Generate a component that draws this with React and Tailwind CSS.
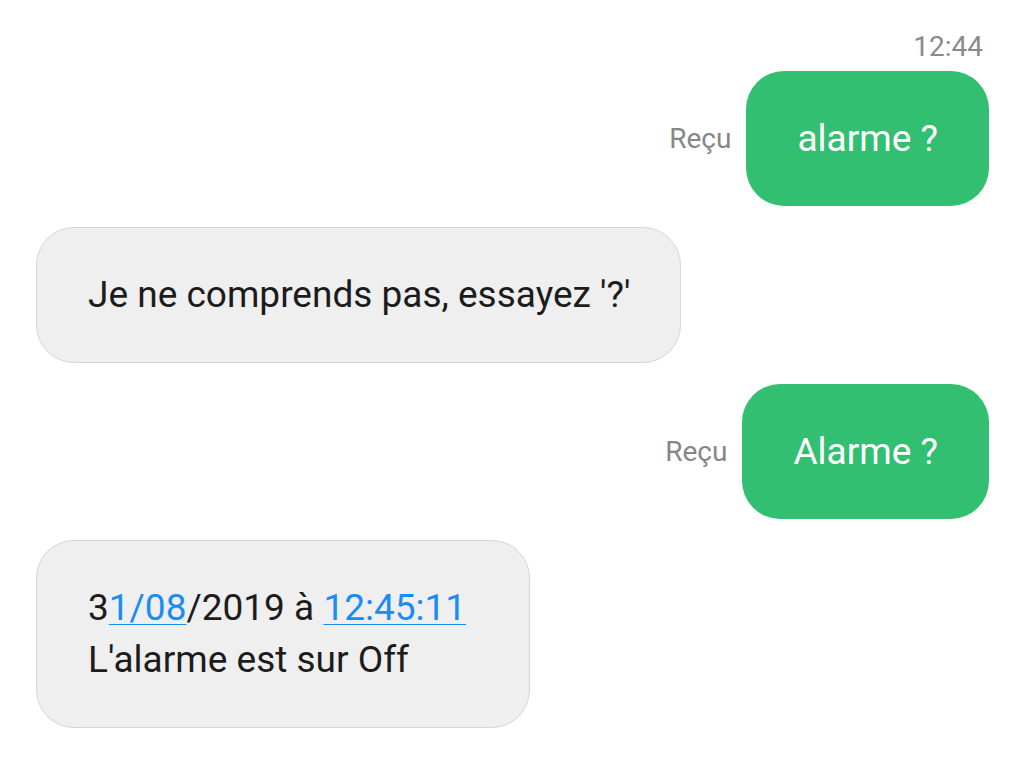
import React from "react";

// sent message (green) with "Reçu" status on its left
function Sent({ text }) {
  return (
    <div className="flex items-center justify-end gap-[15px]">
      <span className="text-[28px] leading-[32px] text-[#868686]">Reçu</span>
      <div className="rounded-[38px] bg-[#33bf71] px-[51px] py-[41px] text-[37px] leading-[53px] text-white">
        {text}
      </div>
    </div>
  );
}

// received message (gray)
function Received({ children, wide }) {
  return (
    <div className="flex justify-start">
      <div
        className={`rounded-[38px] border border-[#d6d6d6] bg-[#efefef] py-[41px] pl-[51px] text-[37px] leading-[52px] text-[#1c1c1c] ${wide ? "pr-[63px]" : "pr-[49px]"}`}
      >
        {children}
      </div>
    </div>
  );
}

export default function App() {
  return (
    <div
      className="flex h-[759px] w-[1020px] flex-col gap-[21px] overflow-hidden bg-white pl-[36px] pr-[31px] pt-[31px]"
      style={{ fontFamily: "Roboto, 'Noto Sans', sans-serif" }}
    >
      <div className="-mb-[13px] pr-[6px] text-right text-[28px] leading-[32px] text-[#8a8a8a]">12:44</div>
      <Sent text="alarme ?" />
      <Received>Je ne comprends pas, essayez '?'</Received>
      <Sent text="Alarme ?" />
      <Received wide>
        <div>
          3<span className="text-[#1a8cf5] underline decoration-1 underline-offset-[4px]">1/08</span>/2019 à{" "}
          <span className="text-[#1a8cf5] underline decoration-1 underline-offset-[4px]">12:45:11</span>
        </div>
        <div>L'alarme est sur Off</div>
      </Received>
    </div>
  );
}
